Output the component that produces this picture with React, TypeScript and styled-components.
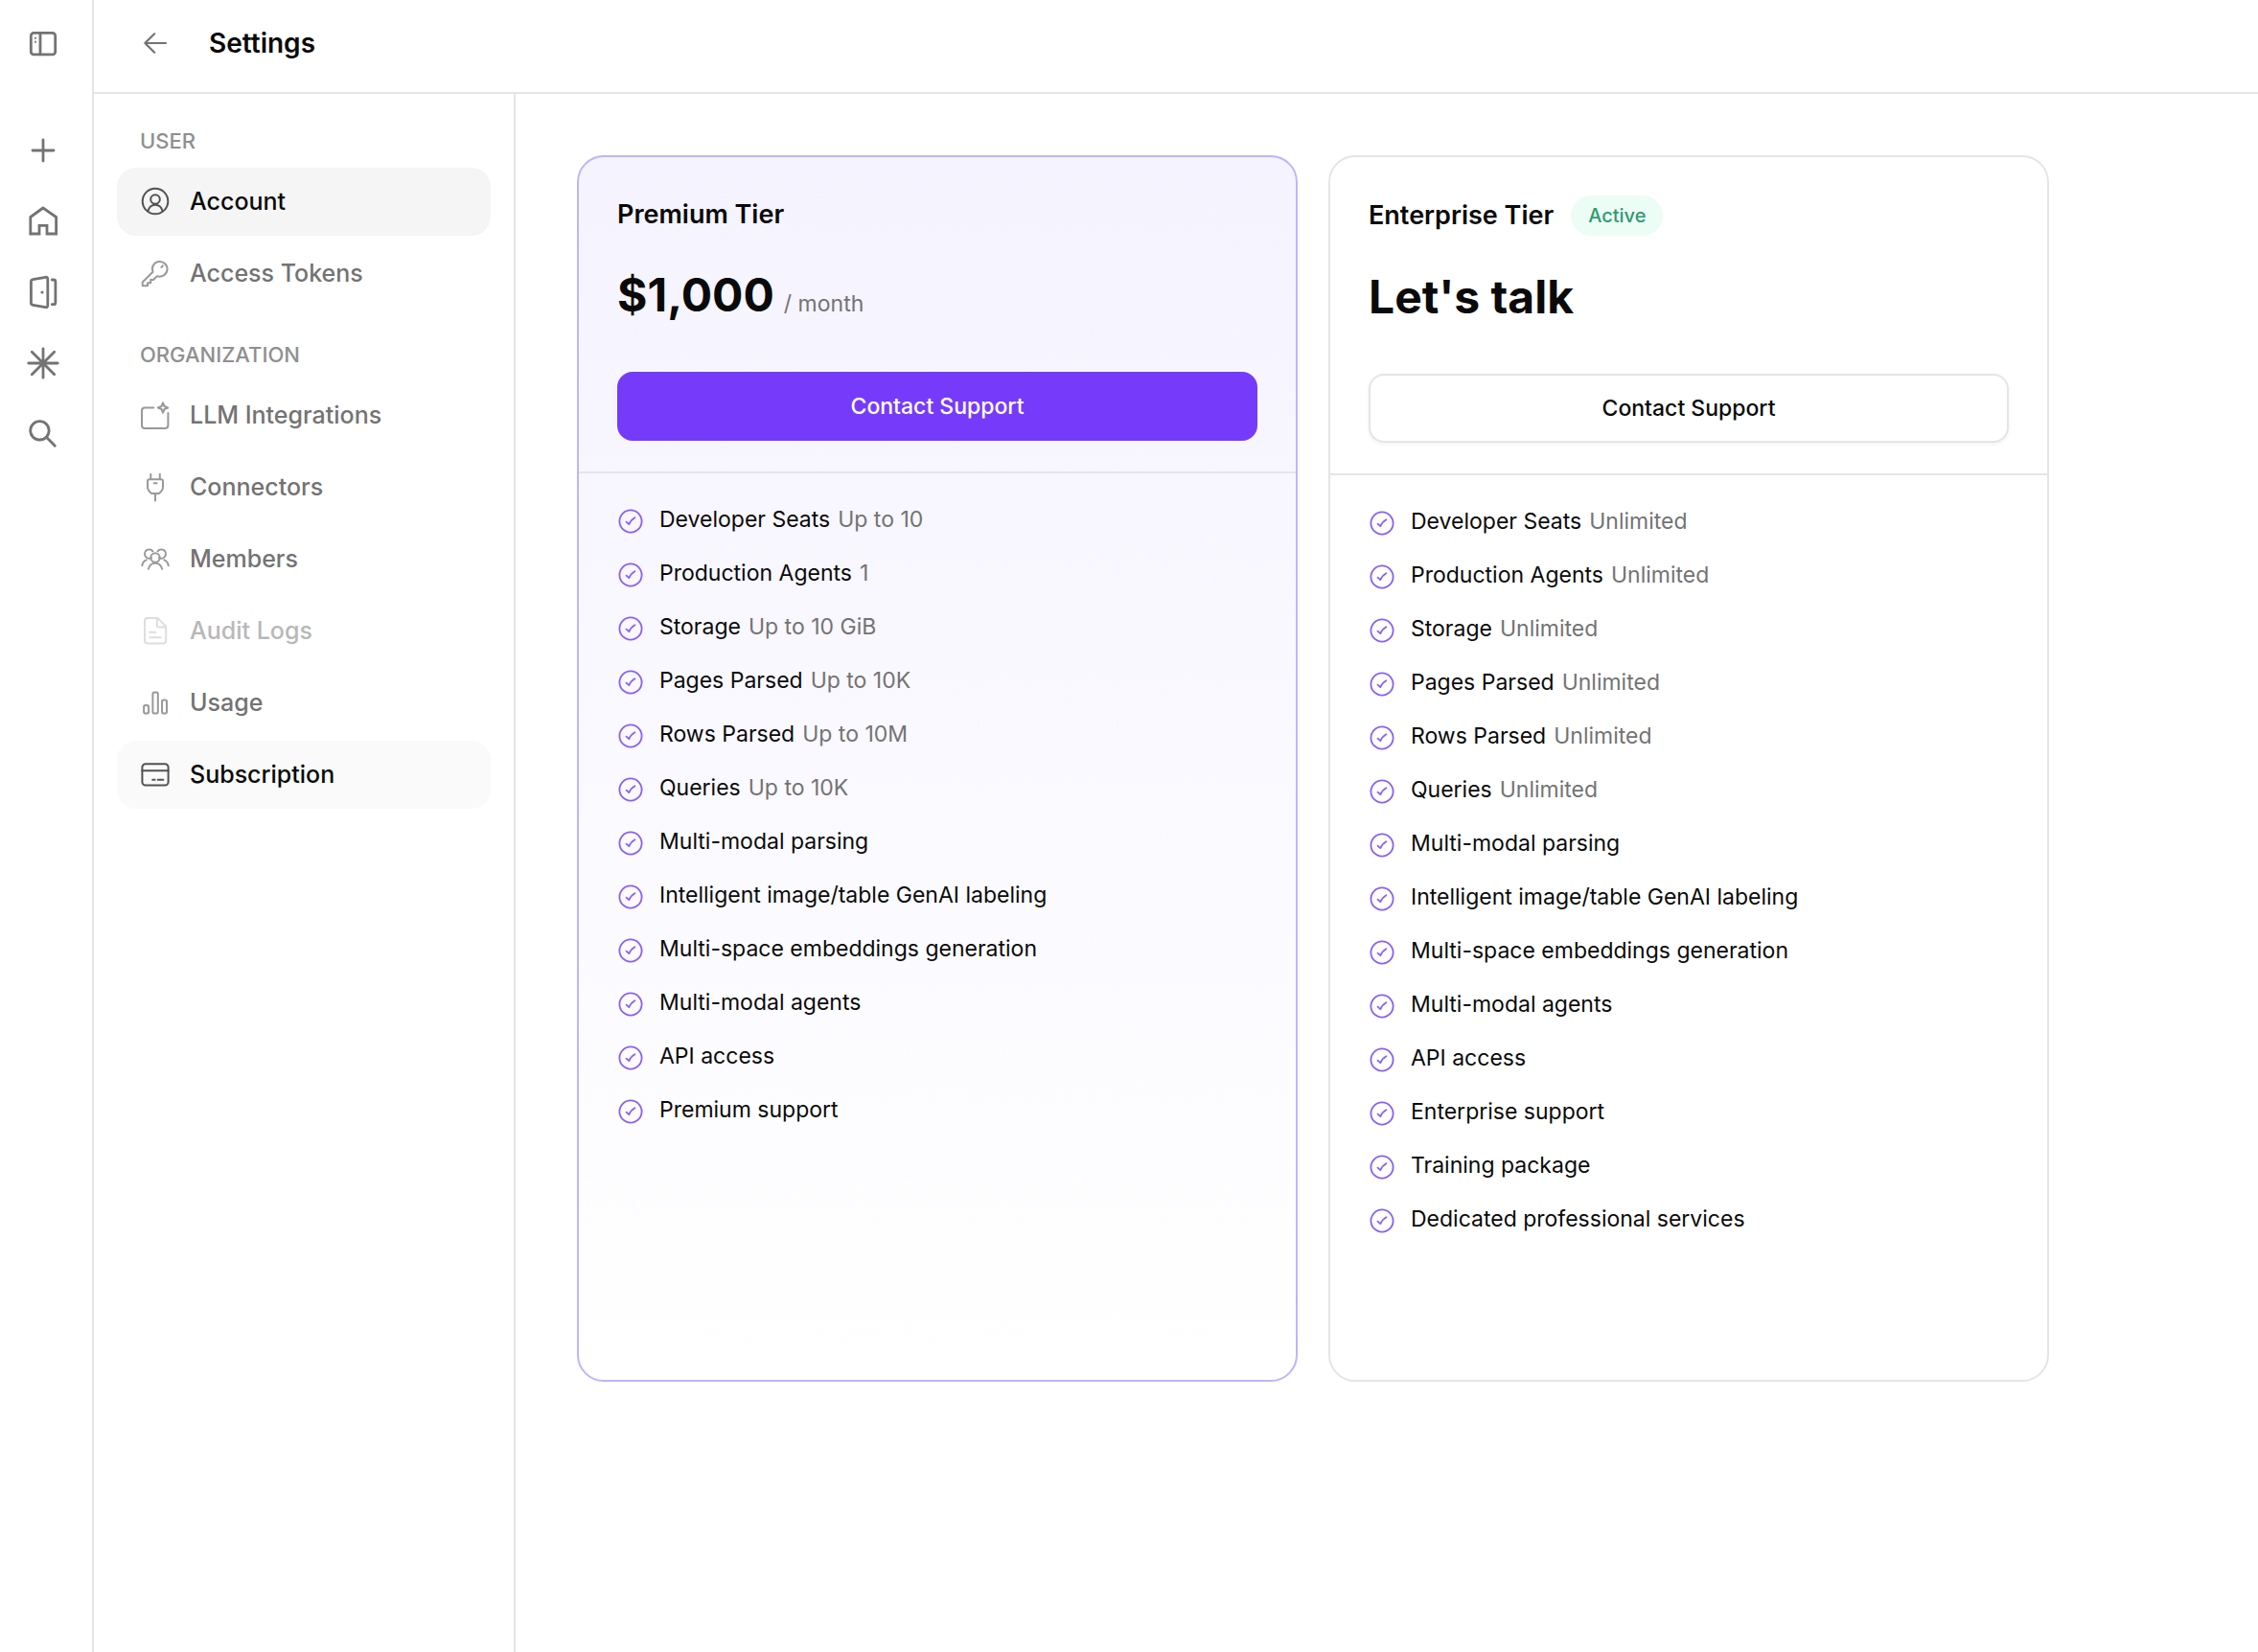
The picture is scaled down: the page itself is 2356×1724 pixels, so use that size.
import React from "react";
import styled, { createGlobalStyle, css } from "styled-components";

const color = {
  text: "#0a0a0a",
  muted: "#737373",
  label: "#8f8f8f",
  faint: "#b8b8b8",
  border: "#e5e5e5",
  violet: "#763bfa",
  violetIcon: "#8860f8",
  violetBorder: "#c0b4fd",
};

const GlobalStyle = createGlobalStyle`
  *, *::before, *::after { box-sizing: border-box; }
  body {
    margin: 0;
    background: #fff;
    color: ${color.text};
    font-family: Inter, "Liberation Sans", sans-serif;
    font-size: 23px;
    line-height: 32px;
  }
  h1, h2, h3, p, ul { margin: 0; padding: 0; }
  ul { list-style: none; }
`;

const Shell = styled.div`
  display: flex;
  min-height: 100vh;
`;

const Rail = styled.nav`
  flex: none;
  width: 98px;
  padding: 20px 24px;
  border-right: 2px solid ${color.border};
  display: flex;
  flex-direction: column;
  gap: 62px;
`;

const RailGroup = styled.div`
  display: flex;
  flex-direction: column;
  gap: 24px;
`;

const RailButton = styled.button`
  display: flex;
  align-items: center;
  justify-content: center;
  width: 42px;
  height: 50px;
  padding: 0;
  border: 0;
  background: none;
  color: ${color.muted};
`;

const Page = styled.div`
  flex: 1;
  min-width: 0;
  display: flex;
  flex-direction: column;
`;

const Header = styled.header`
  display: flex;
  align-items: center;
  gap: 40px;
  height: 98px;
  padding: 0 48px 6px;
  border-bottom: 2px solid ${color.border};
`;

const BackButton = styled.button`
  display: flex;
  padding: 0;
  border: 0;
  background: none;
  color: ${color.muted};
`;

const PageTitle = styled.h1`
  font-size: 28px;
  line-height: 36px;
  font-weight: 600;
`;

const Body = styled.div`
  flex: 1;
  display: flex;
`;

const Sidebar = styled.nav`
  flex: none;
  width: 440px;
  padding: 0 24px;
  border-right: 2px solid ${color.border};
`;

const GroupLabel = styled.h2`
  padding: 37px 24px 16px;
  font-size: 22px;
  line-height: 24px;
  font-weight: 500;
  color: ${color.label};
`;

const NavList = styled.ul`
  display: flex;
  flex-direction: column;
  gap: 4px;
`;

type Tone = "selected" | "hovered" | "normal" | "disabled";

const toneStyle = {
  selected: css`
    background: #f5f5f5;
    color: ${color.text};
    --icon: #525252;
  `,
  hovered: css`
    background: #fafafa;
    color: ${color.text};
    --icon: #525252;
  `,
  normal: css`
    color: ${color.muted};
    --icon: #999;
  `,
  disabled: css`
    color: ${color.faint};
    --icon: #dedede;
  `,
};

const NavLink = styled.a<{ $tone: Tone }>`
  display: flex;
  align-items: center;
  gap: 20px;
  height: 71px;
  padding: 0 24px 2px;
  border-radius: 20px;
  font-size: 25px;
  font-weight: 500;
  text-decoration: none;
  ${(p) => toneStyle[p.$tone]}

  svg {
    color: var(--icon);
  }
`;

const Main = styled.main`
  flex: 1;
  min-width: 0;
  padding: 64px;
`;

const Plans = styled.div`
  display: grid;
  grid-template-columns: repeat(2, minmax(0, 1fr));
  gap: 32px;
  max-width: 1536px;
`;

const Card = styled.section<{ $featured?: boolean }>`
  min-height: 1280px;
  border: 2px solid ${(p) => (p.$featured ? color.violetBorder : color.border)};
  border-radius: 28px;
  background: ${(p) => (p.$featured ? "linear-gradient(#f5f3ff, #fff)" : "#fff")};
`;

const CardHead = styled.div`
  padding: 40px 40px 32px;
  border-bottom: 2px solid ${color.border};
`;

const TitleRow = styled.div`
  display: flex;
  align-items: center;
  gap: 18px;
  min-height: 40px;
`;

const PlanTitle = styled.h3`
  font-size: 27px;
  line-height: 40px;
  font-weight: 600;
`;

const Badge = styled.span`
  padding: 6px 18px;
  border-radius: 21px;
  background: #ecfdf5;
  color: #2f9b6f;
  font-size: 20px;
  line-height: 30px;
  font-weight: 500;
`;

const PriceRow = styled.p`
  display: flex;
  align-items: baseline;
  gap: 10px;
  margin: 32px 0 48px;
`;

const Price = styled.span`
  font-size: 48px;
  line-height: 64px;
  font-weight: 700;
`;

const Muted = styled.span`
  color: ${color.muted};
`;

const PlanButton = styled.button<{ $primary?: boolean }>`
  display: block;
  width: 100%;
  height: 72px;
  border: 2px solid ${(p) => (p.$primary ? color.violet : color.border)};
  border-radius: 16px;
  background: ${(p) => (p.$primary ? color.violet : "#fff")};
  color: ${(p) => (p.$primary ? "#fff" : color.text)};
  box-shadow: ${(p) => (p.$primary ? "none" : "0 2px 4px rgba(0, 0, 0, 0.05)")};
  font-family: inherit;
  font-size: 23px;
  line-height: 32px;
  font-weight: 500;
`;

const Features = styled.ul`
  display: flex;
  flex-direction: column;
  gap: 24px;
  && {
    padding: 32px 40px;
  }
`;

const Feature = styled.li`
  display: flex;
  gap: 16px;
`;

const FeatureIcon = styled.span`
  display: flex;
  height: 28px;
  margin-top: 4px;
  color: ${color.violetIcon};
`;

const FeatureText = styled.span`
  display: flex;
  gap: 8px;
`;

const Svg = styled.svg`
  flex: none;
  display: block;
  fill: none;
  stroke: currentColor;
  stroke-linecap: round;
  stroke-linejoin: round;
`;

type IconProps = { size?: number; weight?: number; children: React.ReactNode };

function Icon({ size = 32, weight = 2, children }: IconProps) {
  return (
    <Svg width={size} height={size} viewBox={`0 0 ${size} ${size}`} strokeWidth={weight} aria-hidden="true">
      {children}
    </Svg>
  );
}

const RailIcon = ({ children }: { children: React.ReactNode }) => (
  <Icon size={36} weight={2.8}>
    {children}
  </Icon>
);

const railTools = [
  { name: "New", art: <path d="M18 7v22M7 18h22" /> },
  {
    name: "Home",
    art: <path strokeLinejoin="miter" d="M17.9 4 4.8 13.5V31H14V22.3h8V31h9.6V13.500Z" />,
  },
  {
    name: "Spaces",
    art: (
      <>
        <path d="M7.3 4.7 20.5 2.3q2.3-.3 2.3 2v27.4q0 2.3-2.3 2L7.3 31.3q-1.9-.3-1.9-2.2V6.9q0-1.9 1.9-2.2Z" />
        <path d="M27.3 5h1.6q2 0 2 2v21.7q0 2-2 2h-1.6" />
        <circle cx="17" cy="18" r="1.6" fill="currentColor" stroke="none" />
      </>
    ),
  },
  {
    name: "Agents",
    art: <path d="M18 2.800v30.400M2.800 18h30.400M6.300 6.300l23.400 23.400M29.700 6.300 6.300 29.700" />,
  },
  {
    name: "Search",
    art: (
      <>
        <circle cx="14.4" cy="14.3" r="9.7" />
        <path d="m21.4 21.3 8.9 9" />
      </>
    ),
  },
];

const userIcon = (
  <>
    <circle cx="16" cy="16" r="13.3" />
    <circle cx="16" cy="14" r="4.8" />
    <path d="M8.3 26.600C9.200 22.500 12.300 19.700 16 19.700s6.800 2.800 7.700 6.900" />
  </>
);

const keyIcon = (
  <>
    <path d="M13.500 14.700A7.800 7.800 0 1 1 18 19.100L15.500 21.500 14 23H11.200v3.300H8v2.900H2.700V25.500L13.500 14.700Z" />
    <path d="M22.300 9.700q1.400-.2 1.500-1.500" />
  </>
);

const llmIcon = (
  <>
    <path d="M14.300 8.400H5.200Q2 8.400 2 11.600V26.800Q2 30 5.200 30H26.200Q29.400 30 29.400 26.800V14" />
    <path d="M24 3.300 25.500 7 29.200 8.500 25.500 10 24 13.700 22.500 10 18.800 8.500 22.500 7Z" />
  </>
);

const plugIcon = (
  <path d="M11.300 2.800v5.400M20.800 2.800v5.400M8 10.200q0-2 2-2h12q2 0 2 2V16c0 3-1.700 5.200-4.200 7h-7.600C9.700 21.200 8 19 8 16ZM16 23v7.500M14.700 12.200h2.800" />
);

const membersIcon = (
  <>
    <circle cx="16" cy="15" r="4.7" />
    <path d="M12 15.200A4.700 4.700 0 1 1 13.500 8.300M20 15.200A4.700 4.700 0 1 0 18.500 8.300" />
    <path d="M2.300 23.200c.4-2.600 1.900-4.800 4.400-5.800M29.700 23.200c-.4-2.600-1.900-4.800-4.400-5.800M8.800 26.700c1-3.600 3.700-5.900 7.200-5.900s6.200 2.300 7.200 5.900" />
  </>
);

const documentIcon = (
  <>
    <path d="M7.800 3h9.700q1 0 1.700.7l7.300 7.300q.7.700.7 1.700V26.500q0 3-3 3H8q-3 0-3-3V6q0-3 2.800-3Z" />
    <path d="M17.800 3.200v7.200q0 2 2 2h7M10.300 17.800h6.200M10.300 23.200h11.400" />
  </>
);

const chartIcon = (
  <>
    <rect x="4.1" y="19" width="5" height="8.6" rx="1.8" />
    <rect x="13.4" y="5.5" width="5.4" height="22.1" rx="1.8" />
    <rect x="23" y="13.5" width="5" height="14.1" rx="1.8" />
  </>
);

const cardIcon = (
  <>
    <rect x="2.4" y="5.3" width="27.2" height="22.2" rx="3.5" />
    <path d="M2.400 12.200h27.200M13.200 21.800h2.400M18.700 21.800h5.600" />
  </>
);

type NavItem = { label: string; icon: React.ReactNode; tone?: Tone };

const groups: { title: string; items: NavItem[] }[] = [
  {
    title: "USER",
    items: [
      { label: "Account", icon: userIcon, tone: "selected" },
      { label: "Access Tokens", icon: keyIcon },
    ],
  },
  {
    title: "ORGANIZATION",
    items: [
      { label: "LLM Integrations", icon: llmIcon },
      { label: "Connectors", icon: plugIcon },
      { label: "Members", icon: membersIcon },
      { label: "Audit Logs", icon: documentIcon, tone: "disabled" },
      { label: "Usage", icon: chartIcon },
      { label: "Subscription", icon: cardIcon, tone: "hovered" },
    ],
  },
];

type Row = [name: string, limit?: string];

const shared: Row[] = [
  ["Multi-modal parsing"],
  ["Intelligent image/table GenAI labeling"],
  ["Multi-space embeddings generation"],
  ["Multi-modal agents"],
  ["API access"],
];

const premium: Row[] = [
  ["Developer Seats", "Up to 10"],
  ["Production Agents", "1"],
  ["Storage", "Up to 10 GiB"],
  ["Pages Parsed", "Up to 10K"],
  ["Rows Parsed", "Up to 10M"],
  ["Queries", "Up to 10K"],
  ...shared,
  ["Premium support"],
];

const enterprise: Row[] = [
  ["Developer Seats", "Unlimited"],
  ["Production Agents", "Unlimited"],
  ["Storage", "Unlimited"],
  ["Pages Parsed", "Unlimited"],
  ["Rows Parsed", "Unlimited"],
  ["Queries", "Unlimited"],
  ...shared,
  ["Enterprise support"],
  ["Training package"],
  ["Dedicated professional services"],
];

type PlanProps = {
  title: string;
  price: string;
  period?: string;
  badge?: string;
  featured?: boolean;
  rows: Row[];
};

function Plan({ title, price, period, badge, featured, rows }: PlanProps) {
  return (
    <Card $featured={featured}>
      <CardHead>
        <TitleRow>
          <PlanTitle>{title}</PlanTitle>
          {badge && <Badge>{badge}</Badge>}
        </TitleRow>
        <PriceRow>
          <Price>{price}</Price>
          {period && <Muted>{period}</Muted>}
        </PriceRow>
        <PlanButton type="button" $primary={featured}>
          Contact Support
        </PlanButton>
      </CardHead>
      <Features>
        {rows.map(([name, limit]) => (
          <Feature key={name}>
            <FeatureIcon>
              <Icon size={28} weight={1.8}>
                <circle cx="14" cy="14" r="11.6" />
                <path d="m9.500 14.600 2.800 2.600q1.700-4.400 6.100-6.900" />
              </Icon>
            </FeatureIcon>
            <FeatureText>
              <span>{name}</span>
              {limit && <Muted>{limit}</Muted>}
            </FeatureText>
          </Feature>
        ))}
      </Features>
    </Card>
  );
}

export default function App() {
  return (
    <>
      <GlobalStyle />
      <Shell>
        <Rail aria-label="Main">
          <RailButton type="button" aria-label="Toggle sidebar">
            <RailIcon>
              <rect x="5.3" y="7.3" width="25.4" height="22.6" rx="3" />
              <path d="M15 7.300v22.600" />
              <path strokeWidth="1.8" d="M10 12.400v.6M10 16.400v.6" />
            </RailIcon>
          </RailButton>
          <RailGroup>
            {railTools.map((tool) => (
              <RailButton key={tool.name} type="button" aria-label={tool.name}>
                <RailIcon>{tool.art}</RailIcon>
              </RailButton>
            ))}
          </RailGroup>
        </Rail>
        <Page>
          <Header>
            <BackButton type="button" aria-label="Back">
              <Icon weight={2.2}>
                <path d="M27 16H5.300M15.200 6.300 5.300 16l9.900 9.700" />
              </Icon>
            </BackButton>
            <PageTitle>Settings</PageTitle>
          </Header>
          <Body>
            <Sidebar aria-label="Settings">
              {groups.map((group) => (
                <section key={group.title}>
                  <GroupLabel>{group.title}</GroupLabel>
                  <NavList>
                    {group.items.map((item) => (
                      <li key={item.label}>
                        <NavLink
                          href="#"
                          $tone={item.tone ?? "normal"}
                          aria-current={item.tone === "selected" ? "page" : undefined}
                          aria-disabled={item.tone === "disabled" || undefined}
                        >
                          <Icon>{item.icon}</Icon>
                          {item.label}
                        </NavLink>
                      </li>
                    ))}
                  </NavList>
                </section>
              ))}
            </Sidebar>
            <Main>
              <Plans>
                <Plan title="Premium Tier" price="$1,000" period="/ month" featured rows={premium} />
                <Plan title="Enterprise Tier" price="Let's talk" badge="Active" rows={enterprise} />
              </Plans>
            </Main>
          </Body>
        </Page>
      </Shell>
    </>
  );
}
